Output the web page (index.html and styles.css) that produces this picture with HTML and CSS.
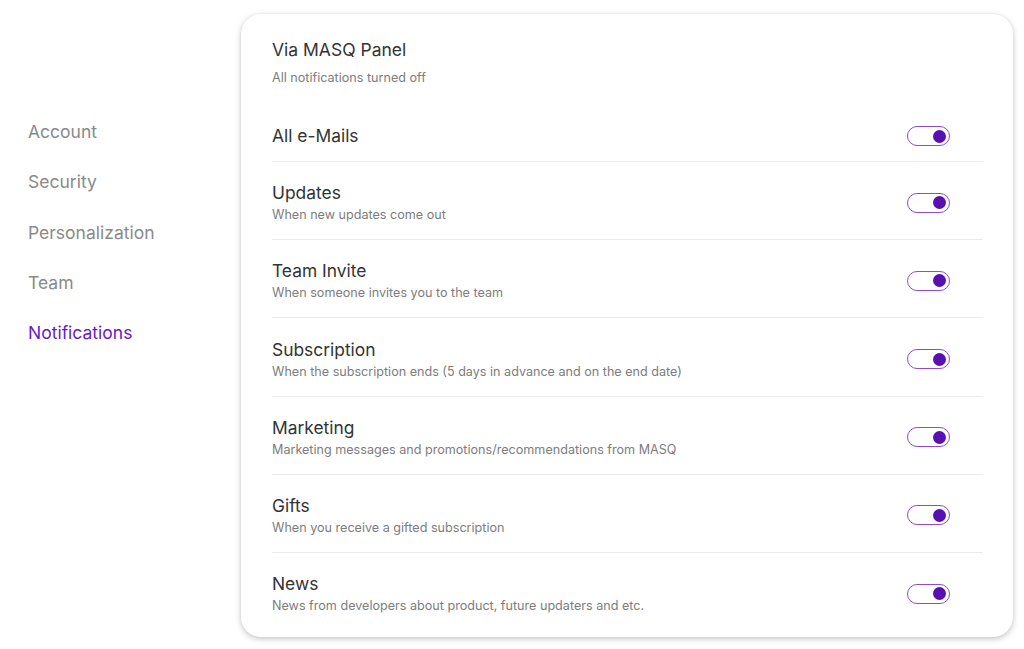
FILE: index.html
```html
<!DOCTYPE html>
<html>
<head>
<meta charset="utf-8">
<link rel="stylesheet" href="styles.css">
</head>
<body>
<div class="page">
  <nav class="sidebar">
    <a class="nav-item">Account</a>
    <a class="nav-item">Security</a>
    <a class="nav-item">Personalization</a>
    <a class="nav-item">Team</a>
    <a class="nav-item active">Notifications</a>
  </nav>
  <section class="card">
    <div class="header">
      <div class="header-title">Via MASQ Panel</div>
      <div class="header-sub">All notifications turned off</div>
    </div>
    <div class="row row-first">
      <div class="row-text"><div class="row-title">All e-Mails</div></div>
      <span class="toggle"><span class="knob"></span></span>
    </div>
    <div class="row">
      <div class="row-text"><div class="row-title">Updates</div><div class="row-desc">When new updates come out</div></div>
      <span class="toggle"><span class="knob"></span></span>
    </div>
    <div class="row">
      <div class="row-text"><div class="row-title">Team Invite</div><div class="row-desc">When someone invites you to the team</div></div>
      <span class="toggle"><span class="knob"></span></span>
    </div>
    <div class="row">
      <div class="row-text"><div class="row-title">Subscription</div><div class="row-desc">When the subscription ends (5 days in advance and on the end date)</div></div>
      <span class="toggle"><span class="knob"></span></span>
    </div>
    <div class="row">
      <div class="row-text"><div class="row-title">Marketing</div><div class="row-desc">Marketing messages and promotions/recommendations from MASQ</div></div>
      <span class="toggle"><span class="knob"></span></span>
    </div>
    <div class="row">
      <div class="row-text"><div class="row-title">Gifts</div><div class="row-desc">When you receive a gifted subscription</div></div>
      <span class="toggle"><span class="knob"></span></span>
    </div>
    <div class="row row-last">
      <div class="row-text"><div class="row-title">News</div><div class="row-desc">News from developers about product, future updaters and etc.</div></div>
      <span class="toggle"><span class="knob"></span></span>
    </div>
  </section>
</div>
</body>
</html>
```
FILE: styles.css
```css
* { box-sizing: border-box; }
html, body { margin: 0; padding: 0; background: #fff; }
body {
  font-family: Inter, "Noto Sans", sans-serif;
  color: #333;
  width: 1024px;
  height: 649px;
  overflow: hidden;
}
.page {
  display: flex;
  align-items: flex-start;
}
.sidebar {
  width: 241px;
  flex: none;
  padding: 120px 0 0 28px;
  display: flex;
  flex-direction: column;
  gap: 26.3px;
}
.nav-item {
  font-size: 17.5px;
  line-height: 24px;
  color: #8a8a8a;
}
.nav-item.active { color: #6a1bbf; }
.card {
  margin-top: 14px;
  width: 772px;
  background: #fff;
  border-radius: 20px;
  box-shadow: 0 2px 6px rgba(0,0,0,0.22), 0 0 2px rgba(0,0,0,0.08);
  padding: 25px 30px 7px 31px;
}
.header-title {
  font-size: 17.5px;
  line-height: 22px;
  color: #333;
}
.header-sub {
  margin-top: 9px;
  font-size: 12.6px;
  line-height: 16px;
  color: #7d7d7d;
}
.row {
  display: flex;
  align-items: center;
  justify-content: space-between;
  padding: 20.2px 33px 16px 0;
  border-bottom: 1px solid #ebebeb;
}
.row-first { padding-top: 39px; padding-bottom: 14px; }
.row-last { border-bottom: none; }
.row-title {
  font-size: 17.4px;
  line-height: 22px;
  color: #333;
}
.row-desc {
  margin-top: 3px;
  font-size: 12.6px;
  line-height: 16px;
  color: #7d7d7d;
}
.toggle {
  width: 43px;
  height: 20px;
  border: 1.5px solid #8a4cd6;
  border-radius: 10px;
  display: flex;
  align-items: center;
  justify-content: flex-end;
  padding-right: 3px;
  flex: none;
}
.knob {
  width: 13px;
  height: 13px;
  border-radius: 50%;
  background: #5810b0;
}
```
